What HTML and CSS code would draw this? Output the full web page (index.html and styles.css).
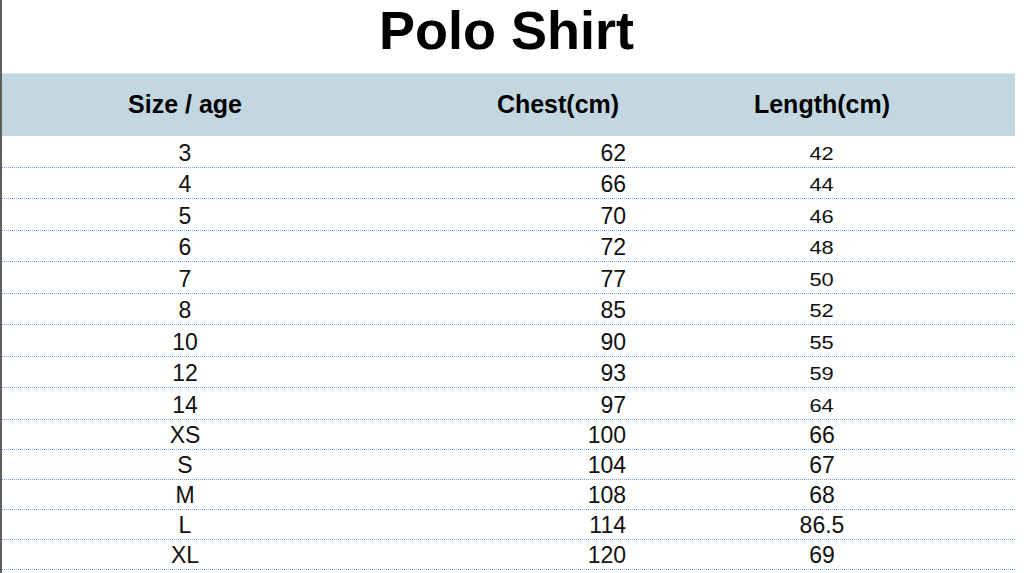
FILE: index.html
```html
<!DOCTYPE html>
<html lang="en">
<head>
<meta charset="utf-8">
<title>Polo Shirt</title>
<link rel="stylesheet" href="styles.css">
</head>
<body>
<div class="sheet">
  <h1 class="title">Polo Shirt</h1>
  <div class="table">
    <div class="head">
      <div class="cell c1">Size / age</div>
      <div class="cell c2">Chest(cm)</div>
      <div class="cell c3">Length(cm)</div>
      <div class="cell c4"></div>
    </div>
    <div class="row tall"><div class="cell c1">3</div><div class="cell c2">62</div><div class="cell c3"><span class="small">42</span></div><div class="cell c4"></div></div>
    <div class="row short"><div class="cell c1">4</div><div class="cell c2">66</div><div class="cell c3"><span class="small">44</span></div><div class="cell c4"></div></div>
    <div class="row tall"><div class="cell c1">5</div><div class="cell c2">70</div><div class="cell c3"><span class="small">46</span></div><div class="cell c4"></div></div>
    <div class="row short"><div class="cell c1">6</div><div class="cell c2">72</div><div class="cell c3"><span class="small">48</span></div><div class="cell c4"></div></div>
    <div class="row tall"><div class="cell c1">7</div><div class="cell c2">77</div><div class="cell c3"><span class="small">50</span></div><div class="cell c4"></div></div>
    <div class="row short"><div class="cell c1">8</div><div class="cell c2">85</div><div class="cell c3"><span class="small">52</span></div><div class="cell c4"></div></div>
    <div class="row tall"><div class="cell c1">10</div><div class="cell c2">90</div><div class="cell c3"><span class="small">55</span></div><div class="cell c4"></div></div>
    <div class="row short"><div class="cell c1">12</div><div class="cell c2">93</div><div class="cell c3"><span class="small">59</span></div><div class="cell c4"></div></div>
    <div class="row tall"><div class="cell c1">14</div><div class="cell c2">97</div><div class="cell c3"><span class="small">64</span></div><div class="cell c4"></div></div>
    <div class="row even"><div class="cell c1">XS</div><div class="cell c2">100</div><div class="cell c3">66</div><div class="cell c4"></div></div>
    <div class="row even"><div class="cell c1">S</div><div class="cell c2">104</div><div class="cell c3">67</div><div class="cell c4"></div></div>
    <div class="row even"><div class="cell c1">M</div><div class="cell c2">108</div><div class="cell c3">68</div><div class="cell c4"></div></div>
    <div class="row even"><div class="cell c1">L</div><div class="cell c2">114</div><div class="cell c3">86.5</div><div class="cell c4"></div></div>
    <div class="row even"><div class="cell c1">XL</div><div class="cell c2">120</div><div class="cell c3">69</div><div class="cell c4"></div></div>
  </div>
</div>
</body>
</html>
```

FILE: styles.css
```css
html, body {
  margin: 0;
  padding: 0;
  background: #ffffff;
}

body {
  width: 1024px;
  height: 573px;
  overflow: hidden;
  font-family: "Liberation Sans", Arial, sans-serif;
  color: #111111;
}

.sheet {
  width: 1013px;
  height: 573px;
  border-left: 2px solid #5e5e5e;
}

.title {
  margin: 0;
  height: 73px;
  padding-right: 4px;
  font-size: 54px;
  line-height: 60px;
  font-weight: bold;
  text-align: center;
  color: #000000;
}

.table {
  display: flex;
  flex-direction: column;
}

.head,
.row {
  display: grid;
  grid-template-columns: 366px 380px 148px 119px;
}

.head {
  height: 63px;
  background: #c3d7e0;
  box-sizing: border-box;
  border-top: 1px solid #d6e5ec;
  font-size: 25px;
  font-weight: bold;
  color: #000000;
}

.head .cell {
  display: flex;
  align-items: center;
  justify-content: center;
  padding-bottom: 2px;
}

.row {
  box-sizing: border-box;
  border-bottom: 1px dotted #7b9bd3;
  font-size: 23px;
  align-items: center;
}

.row.tall { height: 32px; padding-top: 2px; }
.row.short { height: 31px; padding-top: 2px; }
.row.even { height: 30px; padding-top: 1px; }

.row .cell {
  line-height: 26px;
}

.row .c1 { text-align: center; }
.row .c2 { text-align: right; padding-right: 122px; }
.row .c3 { text-align: center; }

.small {
  display: inline-block;
  font-size: 19px;
  line-height: 26px;
  transform: scaleX(1.15);
}
```
